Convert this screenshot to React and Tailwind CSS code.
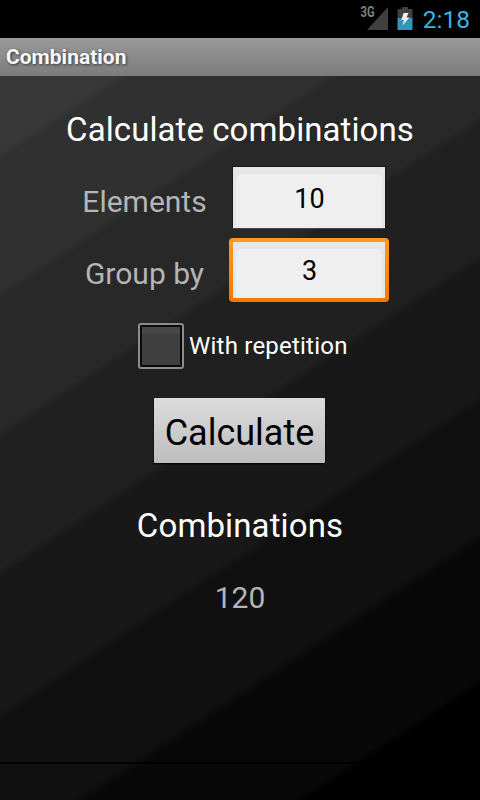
import React, { useState } from "react";

function combine(n, k, repetition) {
  const total = repetition ? n + k - 1 : n;
  let result = 1;
  for (let i = 1; i <= k; i++) {
    result = (result * (total - k + i)) / i;
  }
  return Math.round(result);
}

function StatusBar() {
  return (
    <div className="flex h-[38px] bg-black">
      <div className="flex flex-1 justify-end">
        <svg width="120" height="38" viewBox="0 0 120 38">
          <text
            x="0.5"
            y="17"
            fontSize="14"
            fontWeight="700"
            fill="#808080"
            textLength="14"
            lengthAdjust="spacingAndGlyphs"
          >
            3G
          </text>
          <path d="M7 30L28 7V30Z" fill="#404040" />
          <path d="M42 7h6v2h4.500v9h-15V9h4.500z" fill="#404040" />
          <path d="M37.500 18h15v12h-15z" fill="#3097b8" />
          <path d="M43.500 13h5l-2 4.500h3L42.500 25.500l1.500-5.500h-2.500z" fill="#f0f0f0" />
        </svg>
      </div>
      <div className="-ml-[57px] mr-2.5 flex items-center pt-0.5 text-[24.500px] leading-none text-[#33b5e5]">
        2:18
      </div>
    </div>
  );
}

function NumberField({ label, value, active, onFocus, onChange }) {
  return (
    <div className="flex h-[72px] items-start">
      <label className="ml-[69px] w-[151px] text-center text-[30px] leading-[72px] text-[#b5b5b5]">
        {label}
      </label>
      <div
        className={
          active
            ? "ml-[9px] h-16 w-40 rounded bg-linear-to-b from-[#ff9a20] to-[#f07800] p-1"
            : "ml-3 h-[63px] w-[154px] border border-t-[#151515] border-x-[#1a1a1a] border-b-[#444444]"
        }
      >
        <div className="h-full w-full bg-[#e6e6e6] px-[3px] pt-[7px]">
          <input
            className="block h-full w-full rounded-t-md bg-[#efefef] pb-[5px] pl-px text-center text-[27px] text-black outline-none"
            value={value}
            onFocus={onFocus}
            onChange={(e) => onChange(e.target.value)}
          />
        </div>
      </div>
    </div>
  );
}

export default function App() {
  const [elements, setElements] = useState("10");
  const [group, setGroup] = useState("3");
  const [active, setActive] = useState("group");
  const [repetition, setRepetition] = useState(false);
  const [result, setResult] = useState(120);

  const calculate = () => {
    setResult(combine(Number(elements), Number(group), repetition));
  };

  return (
    <div className="flex h-[800px] w-[480px] flex-col overflow-hidden bg-black font-['Roboto',sans-serif]">
      <StatusBar />

      {/* Title bar */}
      <div className="flex h-[38px] items-center bg-linear-to-b from-[#9a9a9a] to-[#7c7c7c] pl-1.5 pt-0.5 text-[21px] font-bold text-[#f8f8f8] [text-shadow:1px_1px_3px_#333]">
        Combination
      </div>

      {/* Diagonal bands, darker towards the bottom right */}
      <main className="flex flex-1 flex-col bg-[linear-gradient(146.7deg,#383838_63px,#303030_71px,#303030_179px,#282828_187px,#282828_296px,#202020_304px,#202020_411px,#181818_419px,#181818_530px,#101010_538px,#101010_645px,#080808_653px,#080808_766px,#000_774px)] pt-[18px]">
        <h1 className="h-[72px] text-center text-[33px] leading-[72px] tracking-[0.08px] text-white">
          Calculate combinations
        </h1>

        <NumberField
          label="Elements"
          value={elements}
          active={active === "elements"}
          onFocus={() => setActive("elements")}
          onChange={setElements}
        />
        <NumberField
          label="Group by"
          value={group}
          active={active === "group"}
          onFocus={() => setActive("group")}
          onChange={setGroup}
        />

        <button
          className="ml-[138px] flex h-[72px] items-center gap-[5px] text-left"
          onClick={() => setRepetition(!repetition)}
        >
          <span className="h-[46px] w-[46px] rounded-[3px] border-2 border-[#8c8c8c] bg-[#0a0a0a] p-0.5">
            <span className="block h-full bg-linear-to-b from-[#484848] from-15% to-[#404040] to-20% text-center text-[28px] leading-[38px] text-[#8cd000]">
              {repetition ? "✓" : ""}
            </span>
          </span>
          <span className="text-[24px] tracking-[0.22px] whitespace-nowrap text-white">
            With repetition
          </span>
        </button>

        <div className="flex h-[108px] justify-center pt-4 pr-px">
          <button
            className="h-[65px] w-[171px] rounded-[1px] bg-linear-to-b from-[#dcdcdc] to-[#bdbdbd] pt-1 text-[36px] leading-none text-black shadow-[0_1px_2px_#000]"
            onClick={calculate}
          >
            Calculate
          </button>
        </div>

        <h2 className="h-[72px] text-center text-[33px] leading-[72px] tracking-[0.12px] text-white">
          Combinations
        </h2>
        <p className="h-[72px] text-center text-[30px] leading-[72px] text-[#b5b5b5]">{result}</p>

        <div className="mt-[128px] h-0.5 w-[360px] bg-black" />
      </main>
    </div>
  );
}
